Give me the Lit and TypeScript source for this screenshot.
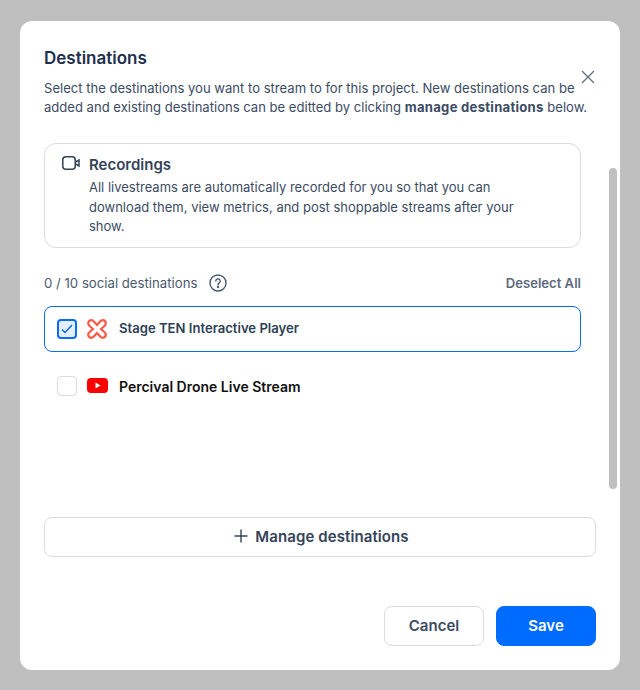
import { LitElement, html, css } from "lit";
import { customElement } from "lit/decorators.js";

@customElement("app-root")
export class AppRoot extends LitElement {
  static styles = css`
    :host { display: block; width: 640px; height: 690px; background: #bfbfbf; font-family: Inter, "Liberation Sans", sans-serif; color: #344358; overflow: hidden; }
    * { box-sizing: border-box; }
    .page { padding: 21px 20px 20px; height: 690px; }
    .modal { position: relative; height: 649px; background: #fff; border-radius: 12px; padding: 25px 24px 24px; display: flex; flex-direction: column; }
    h1 { margin: 0; font-size: 17px; line-height: 24px; font-weight: 600; color: #1e2f4b; }
    .desc { margin: 9px 0 0; font-size: 13.07px; line-height: 19px; color: #3b4b63; width: 545px; }
    .desc b { font-weight: 700; letter-spacing: .28px; }
    .close { position: absolute; left: 561px; top: 49px; width: 14px; height: 14px; display: block; }
    .thumb { position: absolute; left: 589px; top: 147px; width: 8px; height: 321px; border-radius: 4px; background: #bfbfbf; }
    .rec { margin-top: 26px; width: 537px; height: 105px; border: 1px solid #d9dce1; border-radius: 12px; padding: 10px 17px; display: flex; gap: 9px; }
    .rec svg { flex: none; margin-top: 2px; }
    .rec h2 { margin: 0; font-size: 15px; line-height: 22px; font-weight: 600; color: #344358; }
    .rec p { margin: 2px 0 0; font-size: 13px; line-height: 19.5px; color: #3b4b63; width: 440px; }
    .count { margin-top: 23px; width: 537px; height: 24px; display: flex; align-items: center; justify-content: space-between; font-size: 13.2px; color: #4a5a70; }
    .count .l { display: flex; align-items: center; gap: 12px; }
    .count b { font-weight: 600; color: #5c6a7d; font-size: 13.1px; }
    .row { width: 537px; height: 46px; margin-top: 11px; border-radius: 8px; display: flex; align-items: center; padding-left: 12px; font-size: 13.1px; font-weight: 600; }
    .row.sel { border: 1px solid #0a6cf5; color: #2f3f56; }
    .row.plain { margin-top: 11px; padding-left: 13px; color: #111; font-size: 14px; }
    .box { flex: none; width: 20px; height: 20px; border-radius: 4px; border: 1px solid #d9dce1; display: grid; place-items: center; }
    .sel .box { border: 2px solid #0a6cf5; background: #e4eefd; }
    .logo { flex: none; margin-left: 10px; display: block; }
    .name { margin-left: 12px; margin-bottom: 2px; }
    .plain .logo { margin-bottom: 1px; }
    .plain .name { margin-left: 11px; margin-bottom: 0; }
    .manage { margin-top: 108px; width: 552px; height: 40px; border: 1px solid #d9dce1; border-radius: 8px; background: #fff; display: flex; align-items: center; justify-content: center; gap: 7px; padding: 0 0 2px 3px; font: 600 15px Inter, sans-serif; letter-spacing: .1px; color: #344358; }
    .foot { margin-top: auto; display: flex; justify-content: flex-end; gap: 12px; width: 552px; }
    .btn { width: 100px; height: 40px; border-radius: 8px; display: grid; place-items: center; font: 600 15px/38px Inter, sans-serif; border: 1px solid #d9dce1; background: #fff; color: #3b4b63; padding-bottom: 1px; }
    .btn.save { background: #006bff; border-color: #006bff; color: #fff; }
  `;
  render() {
    return html`<div class="page"><div class="modal">
      <h1>Destinations</h1>
      <p class="desc">Select the destinations you want to stream to for this project. New destinations can be added and existing destinations can be editted by clicking <b>manage destinations</b> below.</p>
      <svg class="close" viewBox="0 0 14 14" fill="none" stroke="#5b6b80" stroke-width="1.2"><path d="M1 1l12 12M13 1L1 13"/></svg>
      <div class="thumb"></div>
      <section class="rec">
        <svg width="18" height="14" viewBox="0 0 18 14" fill="none" stroke="#344358" stroke-width="1.5"><rect x=".8" y=".8" width="12.4" height="12.4" rx="3"/><path d="M13.500 6l3.500-2v6l-3.500-2"/></svg>
        <div><h2>Recordings</h2><p>All livestreams are automatically recorded for you so that you can download them, view metrics, and post shoppable streams after your show.</p></div>
      </section>
      <div class="count"><span class="l">0 / 10 social destinations
        <svg width="18" height="18" viewBox="0 0 18 18" fill="none" stroke="#4a5a70" stroke-width="1.4"><circle cx="9" cy="9" r="8"/><path d="M6.800 7a2.200 2.200 0 1 1 3.400 1.900c-.8.5-1.200.9-1.200 1.800" stroke-linecap="round"/><circle cx="9" cy="13" r=".5"/></svg></span>
        <b>Deselect All</b></div>
      <div class="row sel"><span class="box"><svg width="12" height="10" viewBox="0 0 12 10" fill="none" stroke="#0a6cf5" stroke-width="1.5"><path d="M1 5.500l3 3L11 1"/></svg></span>
        <svg class="logo" width="20" height="20" viewBox="0 0 20 20" fill="none" stroke="#fb5a44" stroke-width="2.2"><path d="M4.500 1.200c2.200 0 3 2.300 5.500 4.800 2.500-2.500 3.300-4.800 5.500-4.800 2 0 3.300 1.300 3.300 3.300 0 2.200-2.300 3-4.800 5.500 2.500 2.500 4.800 3.300 4.800 5.500 0 2-1.300 3.300-3.300 3.300-2.200 0-3-2.300-5.500-4.800-2.500 2.500-3.300 4.800-5.500 4.800-2 0-3.300-1.300-3.300-3.300 0-2.200 2.300-3 4.800-5.500-2.500-2.500-4.800-3.300-4.800-5.500 0-2 1.300-3.300 3.300-3.300z"/></svg>
        <span class="name">Stage TEN Interactive Player</span></div>
      <div class="row plain"><span class="box"></span>
        <svg class="logo" width="21" height="15" viewBox="0 0 21 15"><rect width="21" height="15" rx="4" fill="#fe0000"/><path d="M8.500 4.500l5 3-5 3z" fill="#fff"/></svg>
        <span class="name">Percival Drone Live Stream</span></div>
      <button class="manage"><svg width="14" height="14" viewBox="0 0 14 14" stroke="#344358" stroke-width="1.4"><path d="M7 .5v13M.5 7h13"/></svg>Manage destinations</button>
      <div class="foot"><div class="btn">Cancel</div><div class="btn save">Save</div></div>
    </div></div>`;
  }
}
